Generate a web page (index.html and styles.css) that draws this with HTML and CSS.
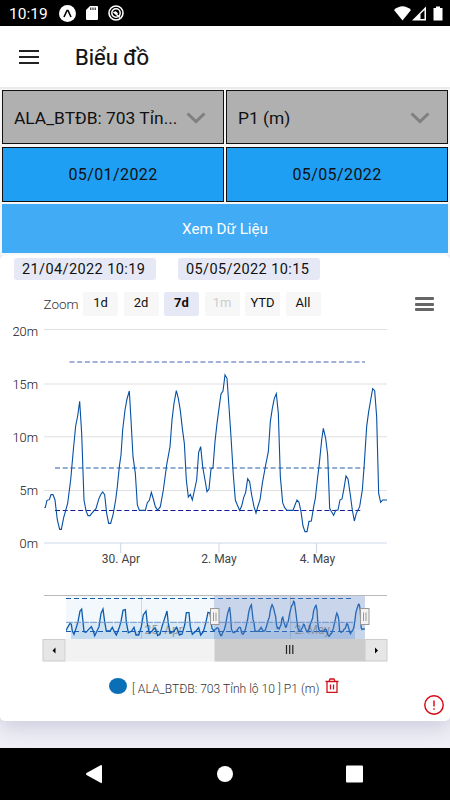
FILE: index.html
```
<!DOCTYPE html>
<html lang="vi">
<head>
    <meta charset="UTF-8">
    <meta name="viewport" content="width=device-width, initial-scale=1.0">
    <title>Biểu đồ</title>
    <link rel="stylesheet" href="styles.css">
</head>

<body>
    <div class="statusbar">
        <span class="time">10:19</span>
        <svg class="app-icon" width="17" height="17" viewBox="0 0 17 17">
            <circle cx="8.5" cy="8.5" r="8.5" fill="#fff"/>
            <path d="M5 12 L8 5.5 H9 L12 12" fill="none" stroke="#000" stroke-width="1.6"/>
        </svg>
        <svg class="sd-icon" width="12" height="14" viewBox="0 0 12 14">
            <path d="M4 0 H11 Q12 0 12 1 V13 Q12 14 11 14 H1 Q0 14 0 13 V4 Z" fill="#fff"/>
            <path d="M4.8 1.5 V4 M7 1.5 V4 M9.2 1.5 V4" stroke="#000" stroke-width="1"/>
        </svg>
        <svg class="app-icon" width="16" height="16" viewBox="0 0 16 16">
            <circle cx="8" cy="8" r="7" fill="none" stroke="#fff" stroke-width="1.6"/>
            <circle cx="8" cy="8" r="4.2" fill="none" stroke="#fff" stroke-width="1.5"/>
            <path d="M5.5 7 L12 12.5 M7 6.5 L9.5 9" stroke="#fff" stroke-width="1.6"/>
        </svg>
        <svg class="signals" width="50" height="15" viewBox="0 0 50 15">
            <path d="M0 4 Q8.5 -3.5 17 4 L8.5 14.5 Z" fill="#fff"/>
            <path d="M18 14.5 L32 0.5 V14.5 Z" fill="#fff"/>
            <path d="M26.5 13 V8 L30.5 4 V13 Z" fill="#000"/>
            <path d="M39.5 2 H42 V0.5 H46 V2 H48.5 V14.5 H39.5 Z" fill="#fff"/>
        </svg>
    </div>

    <header class="header">
        <div class="menu"><i></i><i></i><i></i></div>
        <h1>Biểu đồ</h1>
    </header>

    <main class="content">
        <div class="filters">
            <div class="select">
                <span>ALA_BTĐB: 703 Tỉn...</span>
                <svg width="20" height="12" viewBox="0 0 20 12"><path d="M1.5 1.5 L10 9.7 L18.5 1.5" fill="none" stroke="#808080" stroke-width="3"/></svg>
            </div>
            <div class="select">
                <span>P1 (m)</span>
                <svg width="20" height="12" viewBox="0 0 20 12"><path d="M1.5 1.5 L10 9.7 L18.5 1.5" fill="none" stroke="#808080" stroke-width="3"/></svg>
            </div>
            <div class="date">05/01/2022</div>
            <div class="date">05/05/2022</div>
            <div class="submit">Xem Dữ Liệu</div>
        </div>

        <section class="card">
            <div class="range">
                <span>21/04/2022 10:19</span>
                <span>05/05/2022 10:15</span>
            </div>
            <div class="zoom">
                <span class="label">Zoom</span>
                <span class="btn">1d</span>
                <span class="btn">2d</span>
                <span class="btn active">7d</span>
                <span class="btn disabled">1m</span>
                <span class="btn">YTD</span>
                <span class="btn">All</span>
                <div class="export"><i></i><i></i><i></i></div>
            </div>

            <svg class="chart" width="450" height="345" viewBox="0 320 450 345">
                <defs>
                    <clipPath id="navClip"><rect x="66" y="596" width="299" height="43"/></clipPath>
                    <polyline id="week" vector-effect="non-scaling-stroke" points="133,563 136,562 141,541 148,539 153,524 159,524 165,540 172,600 179,628 184,628 191,593 203,550 212,480 220,390 227,318 233,288 239,244 245,340 252,540 258,572 264,587 270,587 277,578 288,566 296,538 302,524 308,516 314,524 320,580 326,610 332,610 339,585 347,540 352,500 358,440 363,405 368,330 375,270 381,237 388,213 393,300 399,410 406,460 412,555 418,571 436,571 442,548 448,541 454,517 460,537 466,560 473,571 481,560 490,510 500,435 510,380 516,300 522,250 529,212 535,235 541,272 547,325 553,370 559,480 565,531 571,523 577,540 590,480 596,397 602,380 608,440 615,480 621,515 627,507 633,447 639,443 645,365 651,310 657,265 663,222 669,213 675,165 681,175 687,260 693,350 700,465 706,540 712,555 719,571 725,558 731,533 737,517 743,476 749,485 755,525 762,560 768,579 774,558 780,540 787,490 797,435 805,395 811,305 817,265 823,235 829,221 835,280 841,470 848,548 854,563 861,571 879,571 885,555 891,540 897,547 903,575 909,618 915,635 921,635 927,604 934,603 941,560 946,535 952,480 958,430 965,360 970,325 977,355 983,405 989,565 995,576 1001,586 1007,571 1014,570 1020,540 1026,537 1032,505 1038,468 1044,477 1051,525 1057,570 1063,603 1069,580 1079,560 1087,510 1093,430 1100,320 1106,275 1112,240 1118,206 1124,212 1130,290 1136,520 1142,547 1148,540 1161,540"/>
                    <polyline id="firstWeek" vector-effect="non-scaling-stroke" points="108,137 113,127 120,115 124,118 127,138 132,148 138,130 144,110 150,78 155,72 159,110 162,140 168,142 176,133 184,125 190,138 194,152 200,140 207,125 213,85 219,72 224,110 229,138 240,138 247,127 253,140 259,150 267,130 273,110 279,76 286,74 289,112 295,143 305,138 312,127 318,150 326,150 334,125 340,90 348,78 352,115 358,145 366,138 375,128 383,152 390,148 396,125 404,100 411,78 415,115 420,145 432,138 440,127 448,150 456,148 464,120 469,83 477,83 481,125 487,148 498,138 506,128 512,150 520,140 527,115 534,82 540,84 546,130 552,138"/>
                </defs>
                <!-- grid -->
                <path class="grid" d="M44 329.5 H387 M44 384 H387 M44 436.8 H387 M44 490.5 H387"/>
                <path class="axis" d="M44 543 H387 M120.7 543 V553 M219 543 V553 M316.5 543 V553"/>
                <g class="ylabel">
                    <text x="38" y="336">20m</text>
                    <text x="38" y="388.5">15m</text>
                    <text x="38" y="442">10m</text>
                    <text x="38" y="494.5">5m</text>
                    <text x="38" y="548">0m</text>
                </g>
                <g class="xlabel">
                    <text x="121" y="563.3">30. Apr</text>
                    <text x="219" y="563.3">2. May</text>
                    <text x="317.5" y="563.3">4. May</text>
                </g>
                <!-- limits -->
                <path class="limit high" d="M69.5 362 H365"/>
                <path class="limit mid" d="M55 468 H365"/>
                <path class="limit low" d="M55 510.5 H362"/>
                <use class="series" href="#week" transform="translate(0 320) scale(.33333)"/>

                <!-- navigator -->
                <rect x="66" y="596" width="299" height="43" fill="#f3f8fd"/>
                <path d="M141.5 596 V639 M290.5 596 V639" stroke="#d3d8de"/>
                <g clip-path="url(#navClip)">
                    <rect x="71" y="622" width="284" height="17" fill="#0b6fb8" fill-opacity=".1"/>
                    <rect x="71" y="631" width="284" height="8" fill="#0b6fb8" fill-opacity=".1"/>
                    <g class="navlabel">
                        <text x="144.5" y="634">25. Apr</text>
                        <text x="294.5" y="634">2. May</text>
                    </g>
                    <use class="navseries" href="#firstWeek" transform="translate(30 585) scale(.33333)"/>
                    <use class="navseries" href="#week" transform="translate(194.5 589) scale(.1467 .0741)"/>
                </g>
                <path class="navlimit" d="M66 598.5 H354"/>
                <path class="navlimit thin" d="M66 622.3 H354"/>
                <path class="navlimit" d="M66 631.5 H354"/>
                <rect x="214" y="596" width="151" height="43" fill="#6685c2" fill-opacity=".3"/>
                <path d="M44 595.5 H387" stroke="#b8b8b8"/>
                <rect x="66" y="639" width="299" height="22.5" fill="#f2f2f2"/>
                <rect x="214.5" y="639" width="150.5" height="22.5" fill="#ccc"/>
                <rect class="arrowbtn" x="43" y="639.5" width="22" height="21.5"/>
                <rect class="arrowbtn" x="365" y="639.5" width="22" height="21.5"/>
                <path d="M55.5 647.5 V653.5 L52.5 650.5 Z M375 647.5 V653.5 L378 650.5 Z" fill="#000"/>
                <path d="M286.5 645 V654 M289.7 645 V654 M292.8 645 V654" stroke="#222" stroke-width="1.2"/>
                <g class="handle">
                    <rect x="210.5" y="608.5" width="8.5" height="16"/>
                    <rect x="360.5" y="608.5" width="8.5" height="16"/>
                    <path d="M213.5 612.5 V621 M216 612.5 V621 M363.5 612.5 V621 M366 612.5 V621"/>
                </g>
            </svg>

            <div class="legend">
                <i class="dot"></i>
                <span>[ ALA_BTĐB: 703 Tỉnh lộ 10 ] P1 (m)</span>
                <svg width="14" height="16" viewBox="0 0 14 16" fill="none" stroke="#d0111b" stroke-width="1.3">
                    <path d="M0.5 3.5 H13.5 M4 3.5 L5 1 H9 L10 3.5 M2 3.5 V14.3 H12 V3.5"/>
                    <path d="M5.5 6.5 V11.5 M8.5 6.5 V11.5"/>
                </svg>
            </div>
            <svg class="warning" width="20" height="20" viewBox="0 0 20 20" fill="none" stroke="#d9000d" stroke-width="1.4">
                <circle cx="10" cy="10" r="9.2"/>
                <path d="M10 5.5 V11.5 M10 13.2 V14.8"/>
            </svg>
        </section>
    </main>

    <nav class="navbar">
        <svg width="450" height="52" viewBox="0 0 450 52" fill="#fff">
            <path d="M86.5 25 L101 17 Q102 17 102 18 V34 Q102 35.5 101 35 L86.5 27 Q85.5 26 86.5 25 Z"/>
            <circle cx="225" cy="26" r="8"/>
            <rect x="346" y="17.5" width="17" height="17" rx="1"/>
        </svg>
    </nav>
</body>

</html>
```
FILE: styles.css
```
* {
    margin: 0;
    padding: 0;
    box-sizing: border-box;
}

body {
    width: 450px;
    height: 800px;
    display: flex;
    flex-direction: column;
    overflow: hidden;
    font-family: Roboto, "Liberation Sans", sans-serif;
    color: #111;
    background-color: #f0f0f6;
}

.statusbar {
    height: 26px;
    display: flex;
    align-items: center;
    padding: 0 6px 0 9px;
    background-color: #000;
    color: #fff;
}

.statusbar .time {
    width: 50px;
    padding-top: 1px;
    font-size: 15.5px;
}

.statusbar .sd-icon {
    margin: 0 10px;
}

.statusbar .signals {
    margin-left: auto;
}

.header {
    height: 61px;
    display: flex;
    align-items: center;
    padding: 2px 19px 0;
    background-color: #fff;
}

.header .menu {
    width: 20px;
    display: flex;
    flex-direction: column;
    gap: 4px;
    margin-bottom: 2px;
}

.header .menu i {
    height: 2px;
    background-color: #222;
}

.header h1 {
    margin-left: 36px;
    font-size: 22px;
    font-weight: 400;
    -webkit-text-stroke: 0.2px #111;
}

.content {
    flex: 1;
    border-top: 2px solid #ebebeb;
}

.filters {
    position: relative;
    z-index: 1;
    display: grid;
    grid-template-columns: 222px 222px;
    grid-template-rows: 54px 55px 49px;
    gap: 2.5px 2px;
    padding: 1px 2px 2px;
    background-color: #f7f7f7;
}

.select {
    display: flex;
    align-items: center;
    justify-content: space-between;
    padding: 1px 17px 0 11px;
    border: 1px solid #111;
    background-color: #b0b0b0;
    font-size: 17.4px;
}

.date {
    display: flex;
    align-items: center;
    justify-content: center;
    border: 1px solid #111;
    background-color: #1f9ff4;
    font-size: 16px;
    letter-spacing: 0.4px;
}

.submit {
    grid-column: 1 / 3;
    display: flex;
    align-items: center;
    justify-content: center;
    background-color: #42abf5;
    color: #fff;
    font-size: 15.2px;
}

.card {
    position: relative;
    height: 466px;
    border-radius: 5px;
    background-color: #fff;
    box-shadow: 0 6px 22px #c9c9dc;
}

.range {
    display: flex;
    gap: 22px;
    padding: 3px 0 0 14px;
}

.range span {
    width: 142px;
    height: 22px;
    padding-left: 8px;
    border-radius: 3px;
    background-color: #e6e9f5;
    font-size: 14.5px;
    line-height: 24px;
    letter-spacing: 0.4px;
    white-space: nowrap;
}

.zoom {
    display: flex;
    gap: 5.5px;
    margin-top: 12px;
    padding-left: 43.5px;
    font-size: 13px;
    line-height: 22px;
}

.zoom .label {
    width: 34px;
    color: #333;
    font-weight: 300;
    font-size: 13.5px;
    line-height: 24px;
}

.zoom .btn {
    width: 35px;
    height: 24px;
    border-radius: 2px;
    background-color: #f7f7f7;
    text-align: center;
}

.zoom .active {
    background-color: #e6e9f5;
    font-weight: 700;
}

.zoom .disabled {
    color: #ccc;
}

.zoom .export {
    display: flex;
    flex-direction: column;
    gap: 2.5px;
    margin: 5px 0 0 88.5px;
}

.zoom .export i {
    width: 19px;
    height: 3px;
    border-radius: 1px;
    background-color: #666;
}

.chart {
    display: block;
    margin-top: 4px;
}

.grid {
    stroke: #e0e0e2;
}

.axis {
    stroke: #ccd6eb;
}

.ylabel {
    text-anchor: end;
    font-size: 12.8px;
    font-weight: 300;
    fill: #111;
}

.xlabel {
    text-anchor: middle;
    font-size: 12px;
    fill: #444;
}

.limit {
    stroke-dasharray: 5 2.7;
}

.high {
    stroke: #8298d0;
    stroke-width: 1.4px;
}

.mid {
    stroke: #6d94c8;
    stroke-width: 1.4px;
}

.low {
    stroke: #1a1a9c;
}

.series {
    fill: none;
    stroke: #0650a4;
    stroke-width: 1.1px;
}

.navseries {
    fill: #0b6fb8;
    fill-opacity: 0.06;
    stroke: #0b5cae;
    stroke-width: 1.3px;
}

.navlabel {
    font-size: 12px;
    fill: #999;
}

.navlimit {
    stroke: #1b5cb0;
    stroke-width: 1px;
    stroke-dasharray: 5 3;
}

.thin {
    stroke: #6f98ca;
    stroke-dasharray: 7 1;
}

.arrowbtn {
    fill: #e6e6e6;
    stroke: #ccc;
}

.handle {
    fill: #f2f2f2;
    stroke: #999;
}

.legend {
    display: flex;
    align-items: center;
    padding: 11px 0 0 109px;
    font-size: 12.1px;
    font-weight: 300;
    color: #333;
}

.legend .dot {
    width: 18px;
    height: 16px;
    border-radius: 50%;
    background-color: #0b6fb8;
}

.legend span {
    margin: 6px 6px 0 5px;
    white-space: nowrap;
}

.warning {
    position: absolute;
    right: 6px;
    bottom: 6px;
}

.navbar {
    height: 52px;
    position: relative;
    background-color: #000;
}
```
